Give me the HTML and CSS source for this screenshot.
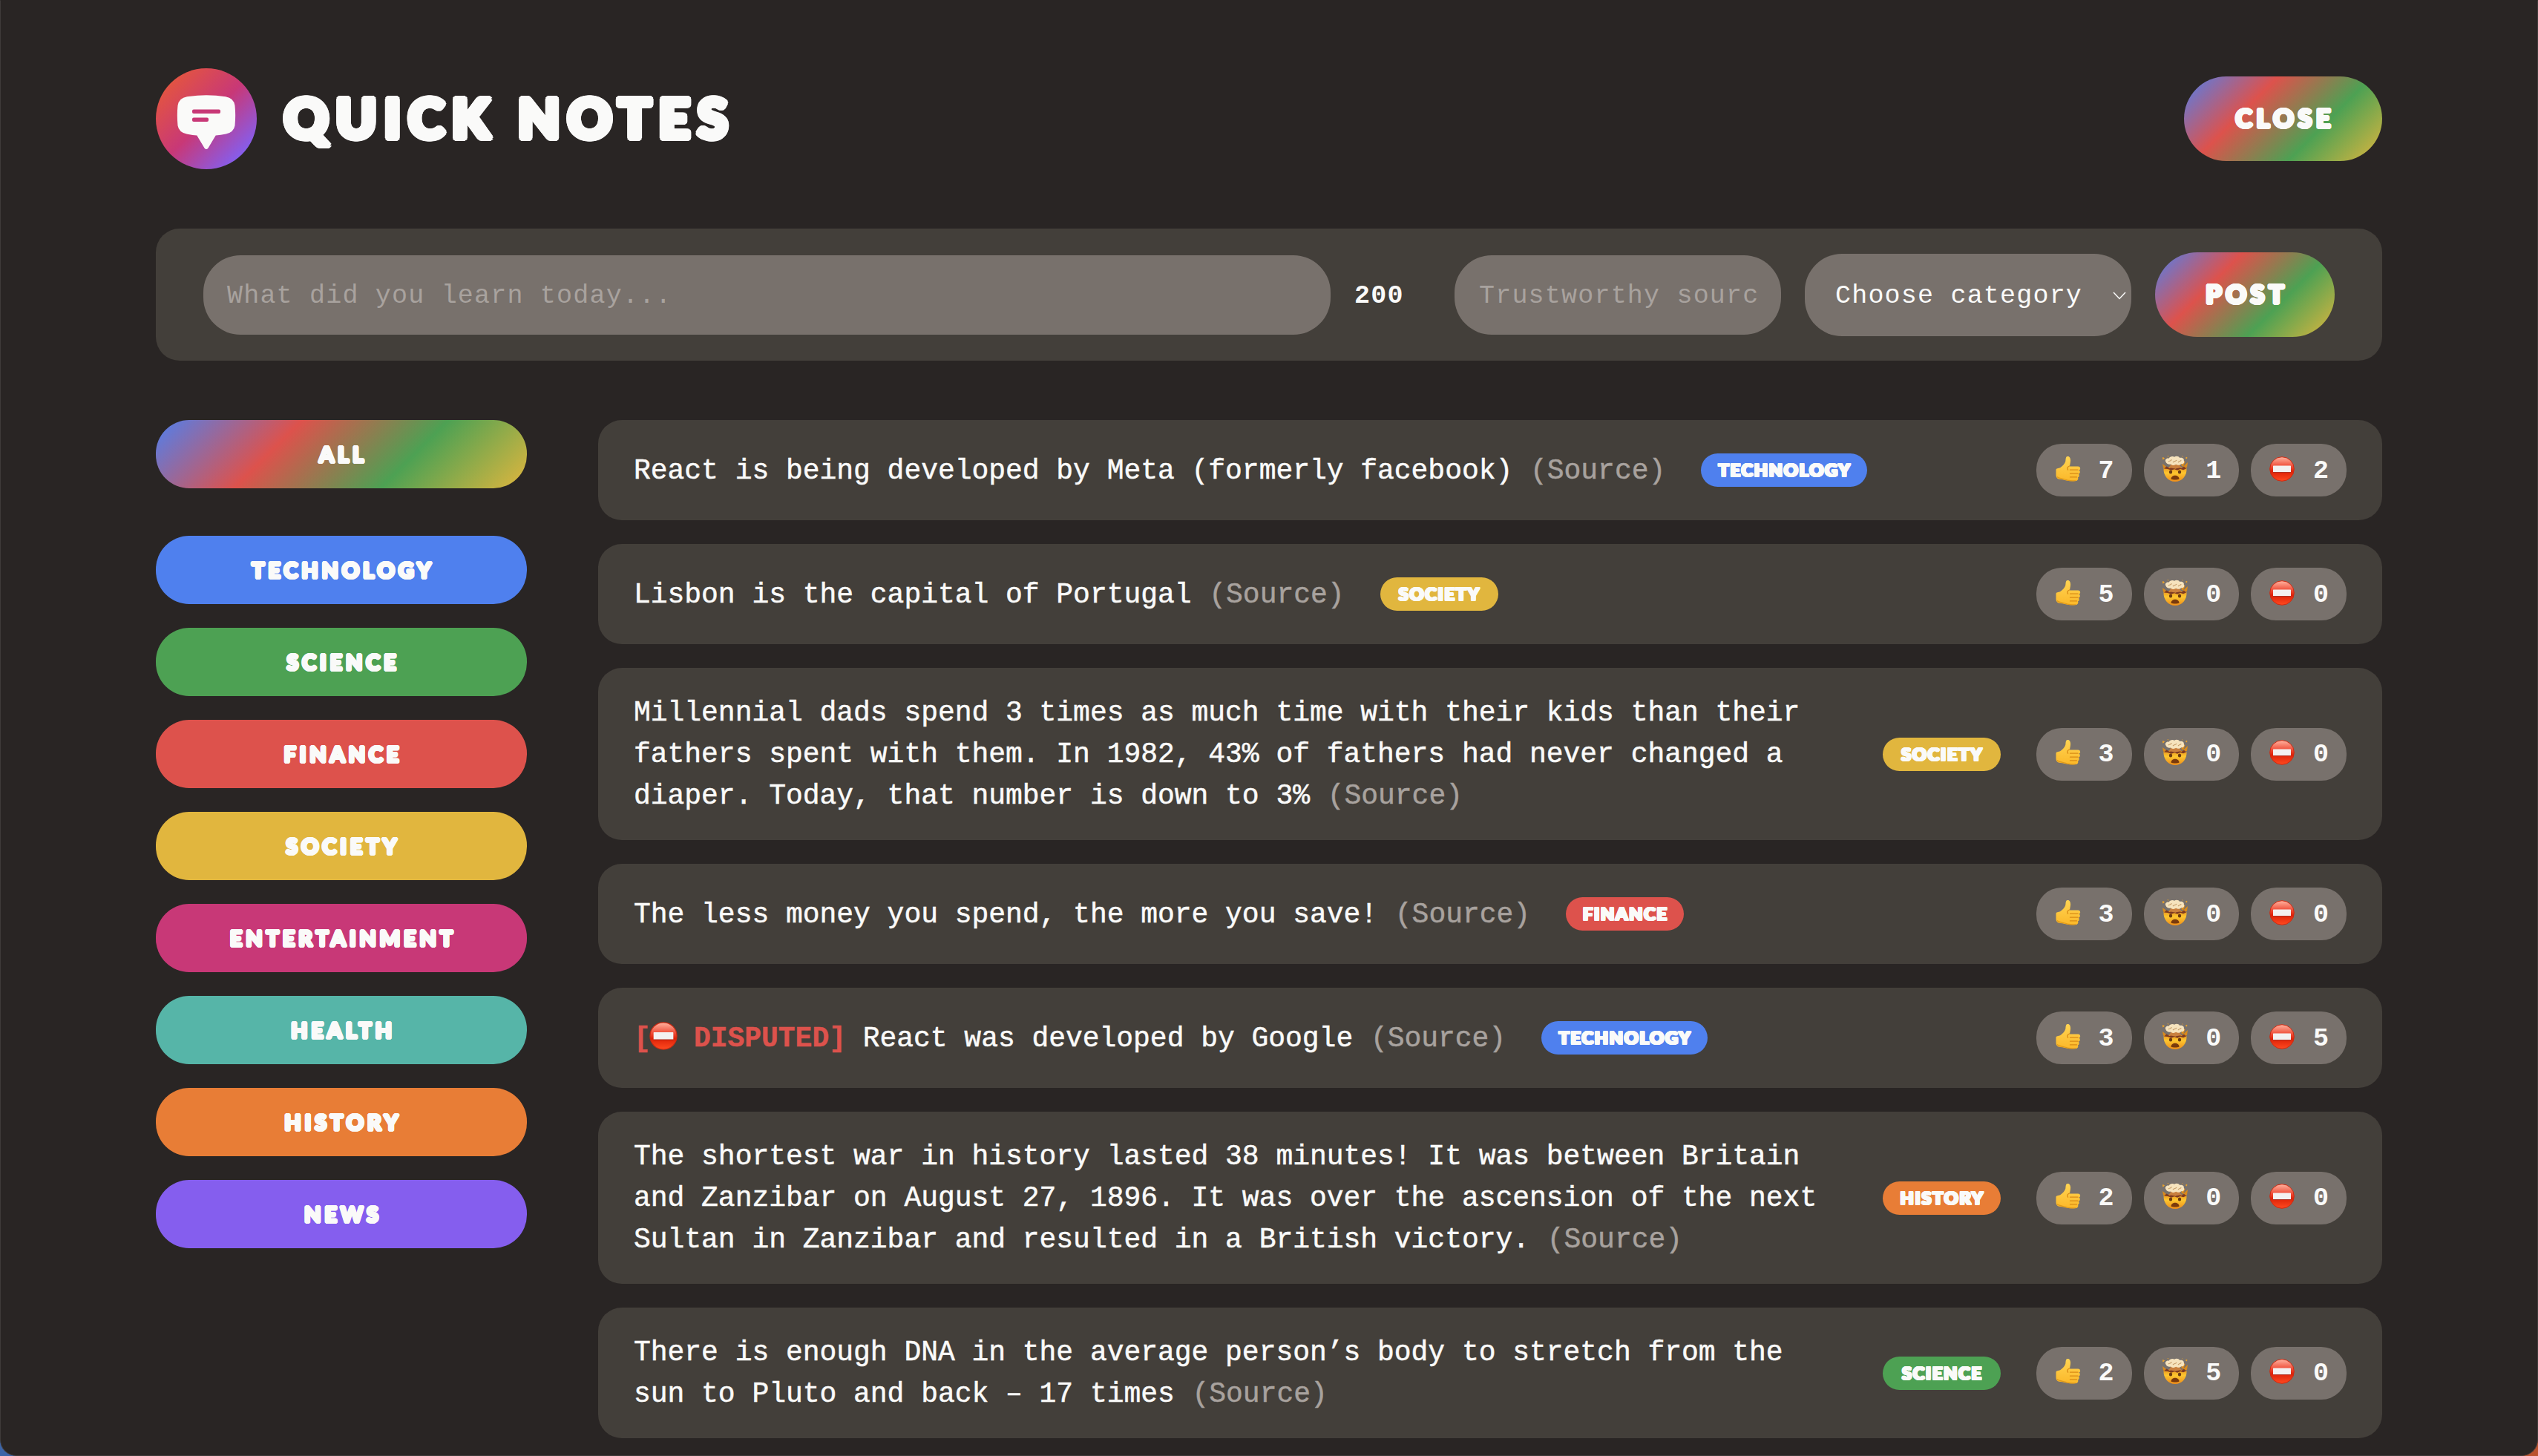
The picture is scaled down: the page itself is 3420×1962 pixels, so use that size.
FILE: index.html
```html
<!DOCTYPE html>
<html lang="en">
<head>
<meta charset="utf-8">
<title>Quick Notes</title>
<link rel="stylesheet" href="styles.css">
</head>
<body>
<svg class="defs" aria-hidden="true">
  <defs>
    <linearGradient id="g-logo" x1="0" y1="0" x2="1" y2="1">
      <stop offset=".12" stop-color="#e4553f"/><stop offset=".5" stop-color="#c83877"/><stop offset=".86" stop-color="#855eee"/>
    </linearGradient>
    <linearGradient id="g-hand" x1="0" y1="0" x2="0" y2="1">
      <stop offset="0" stop-color="#ffd453"/><stop offset="1" stop-color="#fbb829"/>
    </linearGradient>
    <linearGradient id="g-face" x1="0" y1="0" x2="0" y2="1">
      <stop offset="0" stop-color="#e8931f"/><stop offset=".4" stop-color="#fdc62f"/><stop offset="1" stop-color="#ee8d1a"/>
    </linearGradient>
    <linearGradient id="g-stop" x1="0" y1="0" x2="0" y2="1">
      <stop offset="0" stop-color="#ffb3a0"/><stop offset=".4" stop-color="#ef4a35"/><stop offset=".6" stop-color="#dd2208"/><stop offset="1" stop-color="#ff4a20"/>
    </linearGradient>
    <symbol id="thumb" viewBox="0 0 36 36">
      <path d="M2.500 19.500c0-3 3-2 6-3.500 3.500-2.500 6-5.500 6.800-8.500.5-1.900-.2-6.200 2.700-6.500 3.300-.3 4.400 3.300 4 7-.3 2.800-1 4.600-.9 6.500h11c3.600 0 4 4.300 1.300 5.100 2.200 1 1.700 4.500-.5 5 1.500 1.300 1 4.200-1 4.700 1.100 1.600.2 4.300-2.200 4.700-3 .5-8 .5-11.500-.3-4-.9-6-1.600-9.500-1.800-4.500-.2-6.200-2.500-6.200-6.500z" fill="url(#g-hand)"/>
      <path d="M21.500 19.200h10.500M21.500 24.200h10.500M21.500 28.900h9M20.600 14c-2.600.8-3.300 3-2 5.200" fill="none" stroke="#d98a14" stroke-width="1.300" stroke-linecap="round"/>
      <path d="M4 28.500c3 3 9 2.400 14 4.600 4 .9 8 .9 11 .4" fill="none" stroke="#e09a1a" stroke-width="1.200"/>
    </symbol>
    <symbol id="mind" viewBox="0 0 36 36">
      <path d="M1.500 2.500l2 1-1.800 1.600zM8 0l.9 1.600M32.300 3l1.600-.8-.3 1.800zM27.500.500l1 1" fill="#e9a22c" stroke="#e9a22c" stroke-width="1"/>
      <path d="M1 11l4 3 3 5-6-2.500zM35 9l-4 3.500-4 5 7-1.500zM29 7l-3 6 3 2 2.500-7z" fill="#d98a1c"/>
      <path d="M2.500 17c5-2 25-2 31 0 .6 10-6 18-15.500 18S2 27 2.500 17z" fill="url(#g-face)"/>
      <path d="M3 17.500l3.500-3 4 2.500 4-2 4 2.500 4-2.500 4 2 3.500-2.300 3 2.800-4 1.800-4-1.300-4 1.800-4-1.500-4 1.500-5-1.800z" fill="#7e3b21"/>
      <path d="M9 16c2-1.500 3-3 3-5h12c0 2 1 3.500 3 5l-9 1.500z" fill="#c9803f"/>
      <path d="M5.500 8.500C3.500 5.500 7 2.800 9.500 3.800 11 .8 15 .2 17 1.800c2.500-1.800 6-1 7.200 1.300 3-.9 6.300 1 5.600 3.700 1.700 2.500-.8 5.200-3.600 4.500-2 1.900-5.200 1.900-7 .5-2.200 1.600-5.400 1.400-7-.4-3 .8-6-.4-6.700-2.900z" fill="#f6e3bd"/>
      <path d="M9 8c2-2 4 0 4-3M15 9c2-2 4-1 5-3M22 9c2-2 4-1 4-3" fill="none" stroke="#c49a66" stroke-width="1.100"/>
      <ellipse cx="12" cy="22" rx="2.200" ry="2.500" fill="#6b3a12"/><ellipse cx="24" cy="22" rx="2.200" ry="2.500" fill="#6b3a12"/>
      <path d="M12.500 31.500c0-6.500 11-6.500 11 0-2.500 1.300-8.500 1.300-11 0z" fill="#7a3a0c"/>
    </symbol>
    <symbol id="stop" viewBox="0 0 36 36">
      <circle cx="18" cy="18" r="16.300" fill="url(#g-stop)" stroke="#cc2a12" stroke-width="1"/>
      <rect x="6" y="13.500" width="24" height="9" rx=".6" fill="#f3f1f1"/>
      <path d="M6 22.500h24" stroke="#a8281a" stroke-width=".9"/>
    </symbol>
  </defs>
</svg>
<div class="window">
  <header class="header">
    <div class="brand">
      <svg class="logo" viewBox="0 0 136 136" role="img" aria-label="Logo">
        <circle cx="68" cy="68" r="68" fill="url(#g-logo)"/>
        <path d="M42 38.200q26-4 52 0 11 1.800 12.500 12 1.300 13.300 0 27-1.500 9-12 11.300-7 1.500-13.800 1.900L70.500 107.500q-2.500 3.200-5 0L55.300 90.400q-7-.4-13.800-1.900-10.500-2.300-12-11.300-1.300-13.700 0-27 1.500-10.200 12.500-12z" fill="#fafaf9"/>
        <rect x="49" y="55.500" width="38" height="5.500" rx="2" fill="#c83877"/>
        <rect x="49" y="66.500" width="22" height="5.500" rx="2" fill="#c83877"/>
      </svg>
      <h1 class="title fat">Quick Notes</h1>
    </div>
    <button class="btn btn-close fat">Close</button>
  </header>

  <form class="form">
    <div class="field field-text">What did you learn today...</div>
    <span class="count">200</span>
    <div class="field field-source"><span class="clip">Trustworthy source...</span></div>
    <div class="field field-select">Choose category
      <svg class="chevron" viewBox="0 0 18 11"><path d="M1 1l8 8.500L17 1" fill="none" stroke="#fafaf9" stroke-width="1.500"/></svg>
    </div>
    <button class="btn btn-post fat">Post</button>
  </form>

  <main class="main">
    <aside class="sidebar">
      <button class="cat cat-all fat">All</button>
      <button class="cat technology fat">Technology</button>
      <button class="cat science fat">Science</button>
      <button class="cat finance fat">Finance</button>
      <button class="cat society fat">Society</button>
      <button class="cat entertainment fat">Entertainment</button>
      <button class="cat health fat">Health</button>
      <button class="cat history fat">History</button>
      <button class="cat news fat">News</button>
    </aside>

    <ul class="notes">
      <li class="note">
        <p>React is being developed by Meta (formerly facebook) <a class="source">(Source)</a></p>
        <span class="tag tag-wide technology fat">Technology</span>
        <div class="votes">
          <button class="vote"><svg><use href="#thumb"/></svg>7</button>
          <button class="vote"><svg><use href="#mind"/></svg>1</button>
          <button class="vote"><svg><use href="#stop"/></svg>2</button>
        </div>
      </li>
      <li class="note">
        <p>Lisbon is the capital of Portugal <a class="source">(Source)</a></p>
        <span class="tag society fat">Society</span>
        <div class="votes">
          <button class="vote"><svg><use href="#thumb"/></svg>5</button>
          <button class="vote"><svg><use href="#mind"/></svg>0</button>
          <button class="vote"><svg><use href="#stop"/></svg>0</button>
        </div>
      </li>
      <li class="note">
        <p>Millennial dads spend 3 times as much time with their kids than their fathers spent with them. In 1982, 43% of fathers had never changed a diaper. Today, that number is down to 3% <a class="source">(Source)</a></p>
        <span class="tag society fat">Society</span>
        <div class="votes">
          <button class="vote"><svg><use href="#thumb"/></svg>3</button>
          <button class="vote"><svg><use href="#mind"/></svg>0</button>
          <button class="vote"><svg><use href="#stop"/></svg>0</button>
        </div>
      </li>
      <li class="note">
        <p>The less money you spend, the more you save! <a class="source">(Source)</a></p>
        <span class="tag finance fat">Finance</span>
        <div class="votes">
          <button class="vote"><svg><use href="#thumb"/></svg>3</button>
          <button class="vote"><svg><use href="#mind"/></svg>0</button>
          <button class="vote"><svg><use href="#stop"/></svg>0</button>
        </div>
      </li>
      <li class="note">
        <p><span class="disputed">[<svg><use href="#stop"/></svg> DISPUTED]</span> React was developed by Google <a class="source">(Source)</a></p>
        <span class="tag tag-wide technology fat">Technology</span>
        <div class="votes">
          <button class="vote"><svg><use href="#thumb"/></svg>3</button>
          <button class="vote"><svg><use href="#mind"/></svg>0</button>
          <button class="vote"><svg><use href="#stop"/></svg>5</button>
        </div>
      </li>
      <li class="note">
        <p>The shortest war in history lasted 38 minutes! It was between Britain and Zanzibar on August 27, 1896. It was over the ascension of the next Sultan in Zanzibar and resulted in a British victory. <a class="source">(Source)</a></p>
        <span class="tag history fat">History</span>
        <div class="votes">
          <button class="vote"><svg><use href="#thumb"/></svg>2</button>
          <button class="vote"><svg><use href="#mind"/></svg>0</button>
          <button class="vote"><svg><use href="#stop"/></svg>0</button>
        </div>
      </li>
      <li class="note">
        <p>There is enough DNA in the average person’s body to stretch from the sun to Pluto and back – 17 times <a class="source">(Source)</a></p>
        <span class="tag science fat">Science</span>
        <div class="votes">
          <button class="vote"><svg><use href="#thumb"/></svg>2</button>
          <button class="vote"><svg><use href="#mind"/></svg>5</button>
          <button class="vote"><svg><use href="#stop"/></svg>0</button>
        </div>
      </li>
    </ul>
  </main>
</div>
</body>
</html>
```
FILE: styles.css
```css
* { margin: 0; padding: 0; box-sizing: border-box; }

html, body { height: 100%; overflow: hidden; }

body {
  background: linear-gradient(to right, #3d65a8, #b9532f);
  color: #fafaf9;
  font-family: "Liberation Mono", monospace;
}

.defs { display: block; width: 0; height: 0; }

.window {
  height: 1962px;
  padding: 91px 209px 0;
  background: #292524;
  border: 1px solid #3f3b3a;
  border-top-color: #292524;
  border-radius: 0 0 22px 22px;
  overflow: hidden;
}

button { border: none; color: inherit; font: inherit; }

/* Chunky rounded display lettering */
.fat {
  font-family: "Lato", sans-serif;
  font-weight: 900;
  line-height: 1;
  text-transform: uppercase;
  white-space: nowrap;
  text-shadow:
    .06em 0, -.06em 0, 0 .06em, 0 -.06em,
    .042em .042em, -.042em .042em, .042em -.042em, -.042em -.042em,
    .055em .023em, -.055em .023em, .055em -.023em, -.055em -.023em,
    .023em .055em, -.023em .055em, .023em -.055em, -.023em -.055em;
}

.header { display: flex; align-items: center; justify-content: space-between; height: 136px; }
.brand { display: flex; align-items: center; gap: 37px; }
.logo { width: 136px; height: 136px; }
.title { padding-bottom: 3px; font-size: 73px; letter-spacing: 10.5px; }

.btn {
  height: 114px;
  padding-bottom: 2px;
  border-radius: 57px;
  font-size: 34px;
  letter-spacing: 5.7px;
  text-indent: 5.7px;
  background: linear-gradient(135deg, #4f80ee, #dd524c, #4da153, #e1b63e);
}
.btn-close { width: 267px; }
.btn-post { width: 242px; }

.form {
  display: flex;
  align-items: center;
  gap: 32px;
  height: 178px;
  margin-top: 80px;
  padding: 0 64px;
  background: #433f3a;
  border-radius: 32px;
  font-size: 35px;
  letter-spacing: 1.2px;
}
.field {
  display: flex;
  align-items: center;
  height: 107px;
  padding: 3px 32px 0;
  border-radius: 50px;
  background: #78716c;
  color: #a8a29e;
  white-space: nowrap;
}
.field-text { flex: 1; }
.count { width: 103px; padding-top: 3px; font-weight: 700; }
.field-source { width: 440px; padding-left: 33px; }
.clip { overflow: hidden; }
.field-select { width: 440px; height: 111px; padding: 3px 7px 0 41px; justify-content: space-between; color: #fafaf9; }
.chevron { width: 18px; height: 11px; }

.main { display: grid; grid-template-columns: 500px 1fr; gap: 96px; margin-top: 80px; }

.sidebar { display: flex; flex-direction: column; gap: 32px; }
.cat { height: 92px; padding-bottom: 2px; border-radius: 45px; font-size: 29px; letter-spacing: 4.8px; text-indent: 4.8px; }
.cat-all { margin-bottom: 32px; background: linear-gradient(135deg, #4f80ee, #dd524c, #4da153, #e1b63e); }

.technology { background: #4f80ee; }
.science { background: #4da153; }
.finance { background: #dd524c; }
.society { background: #e1b63e; }
.entertainment { background: #c83877; }
.health { background: #56b5a8; }
.history { background: #e87d36; }
.news { background: #855eee; }

.notes { display: flex; flex-direction: column; gap: 32px; list-style: none; }
.note {
  display: flex;
  align-items: center;
  gap: 48px;
  height: 135px;
  padding: 0 48px;
  background: #433f3a;
  border-radius: 32px;
}
.note:nth-child(3), .note:nth-child(6) { height: 232px; }
.note:nth-child(7) { height: 176px; }
.note p { padding-top: 2px; font-size: 38px; line-height: 56px; letter-spacing: -.03px; -webkit-text-stroke: .5px; }
.source { margin-left: 1px; color: #a8a29e; }
.disputed { color: #dd524c; font-weight: 700; }
.disputed svg { width: 40px; height: 40px; margin: 0 -2.300px; vertical-align: -6px; }

.tag {
  flex: none;
  width: 159px;
  height: 45px;
  border-radius: 22.5px;
  font-size: 23.5px;
  line-height: 44px;
  letter-spacing: 1.8px;
  text-indent: 1.8px;
  text-align: center;
}
.tag-wide { width: 224px; }

.votes { display: flex; gap: 16px; margin-left: auto; }
.vote {
  display: flex;
  align-items: center;
  justify-content: space-between;
  width: 128.700px;
  height: 71px;
  padding: 2px 24px 0;
  border-radius: 34px;
  background: #78716c;
  font-size: 35px;
  font-weight: 700;
}
.vote svg { width: 36px; height: 36px; margin-bottom: 6px; }
```
